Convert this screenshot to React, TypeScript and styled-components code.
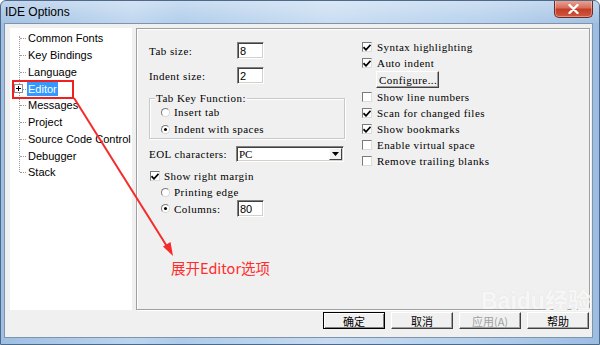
import styled, { createGlobalStyle } from 'styled-components';

const GlobalStyle = createGlobalStyle`
	html, body {
		margin: 0;
		padding: 0;
	}
	body {
		width: 600px;
		height: 345px;
		overflow: hidden;
		background: #ffffff;
	}
	* {
		box-sizing: border-box;
	}
`;

const Window = styled.div`
	position: relative;
	width: 600px;
	height: 345px;
	display: flex;
	flex-direction: column;
	border: 1px solid #4f6a89;
	border-radius: 6px 6px 0 0;
	overflow: hidden;
	background: linear-gradient(
		to right,
		#9ebfe3 0%,
		#bcd4ee 22%,
		#aecbea 30%,
		#c6dbf1 55%,
		#b4cfec 80%,
		#9cbde2 100%
	);
`;

const TitleBar = styled.div`
	height: 22px;
	display: flex;
	align-items: flex-start;
	justify-content: space-between;
	padding-left: 4px;
	background: linear-gradient(
		to bottom,
		rgba(255, 255, 255, 0.35),
		rgba(255, 255, 255, 0.05)
	);
`;

const Title = styled.span`
	font: 12px 'Liberation Sans', Arial, sans-serif;
	line-height: 22px;
	color: #000;
`;

const CloseButton = styled.div`
	width: 39px;
	height: 18px;
	margin-right: 6px;
	margin-top: -1px;
	border: 1px solid #6b2a22;
	border-top: none;
	border-radius: 0 0 5px 5px;
	background: linear-gradient(
		to bottom,
		#e9a99b 0%,
		#d7705c 45%,
		#c23d27 55%,
		#d0583f 100%
	);
	box-shadow: inset 0 0 0 1px rgba(255, 255, 255, 0.35);
	display: flex;
	align-items: center;
	justify-content: center;
`;

const Client = styled.div`
	flex: 1;
	margin: 0 6px 6px 3px;
	border: 1px solid #7f93aa;
	background: #f0f0f0;
	display: flex;
	flex-direction: column;
	padding-top: 4px;
`;

const MainRow = styled.div`
	display: flex;
	gap: 4px;
	padding: 0 2px 0 5px;
	height: 282px;
`;

const TreeBox = styled.div`
	position: relative;
	width: 122px;
	height: 282px;
	background: #ffffff;
	padding-top: 2px;
	font: 11px 'Liberation Sans', Arial, sans-serif;
	color: #000;

	&::before {
		content: '';
		position: absolute;
		left: 9px;
		top: 8px;
		height: 136px;
		border-left: 1px dotted #9a9a9a;
	}
`;

const TreeItem = styled.div`
	position: relative;
	height: 16.75px;
	display: flex;
	align-items: center;
	padding-left: 17px;

	&::before {
		content: '';
		position: absolute;
		left: 10px;
		top: 50%;
		width: 6px;
		border-top: 1px dotted #9a9a9a;
	}
`;

const TreeLabel = styled.span<{ $selected?: boolean }>`
	padding: 0 1px;
	line-height: 14px;
	white-space: nowrap;
	background: ${(p) => (p.$selected ? '#3399ff' : 'transparent')};
	color: ${(p) => (p.$selected ? '#ffffff' : '#000000')};
`;

const Expander = styled.span`
	position: absolute;
	left: 4px;
	top: 4px;
	width: 9px;
	height: 9px;
	z-index: 1;
	border: 1px solid #8e8e8e;
	background: #ffffff;
	display: flex;
`;

const OptionsPanel = styled.div`
	flex: 1;
	height: 282px;
	border: 1px solid #a0a0a0;
	box-shadow: inset 1px 1px 0 #ffffff, 1px 1px 0 #ffffff;
	display: flex;
	gap: 17px;
	padding: 10px 0 0 12px;
	font: 11px 'Liberation Serif', 'Times New Roman', serif;
	letter-spacing: 0.45px;
	color: #000;
`;

const LeftColumn = styled.div`
	width: 196px;
	margin-top: 3px;
	display: flex;
	flex-direction: column;
`;

const RightColumn = styled.div`
	display: flex;
	flex-direction: column;
`;

const FieldRow = styled.div<{ $top?: number; $indent?: number }>`
	display: flex;
	align-items: center;
	height: 17px;
	margin-top: ${(p) => p.$top ?? 0}px;
	padding-left: ${(p) => p.$indent ?? 0}px;
`;

const FieldLabel = styled.span<{ $width: number }>`
	width: ${(p) => p.$width}px;
	white-space: nowrap;
`;

const TextInput = styled.input`
	width: 27px;
	height: 17px;
	padding: 0 0 0 2px;
	margin: 0;
	border: 1px solid;
	border-color: #808080 #ffffff #ffffff #808080;
	box-shadow: inset 1px 1px 0 #404040, inset -1px -1px 0 #d4d0c8;
	background: #ffffff;
	font: 11px 'Liberation Sans', Arial, sans-serif;
	color: #000;
	outline: none;
`;

const Group = styled.div`
	position: relative;
	margin-top: 14px;
	border: 1px solid #c8c8c8;
	box-shadow: inset 1px 1px 0 #ffffff, 1px 1px 0 #ffffff;
	padding: 5px 0 1px 11px;
	display: flex;
	flex-direction: column;
	gap: 1px;
`;

const GroupTitle = styled.span`
	position: absolute;
	top: -7px;
	left: 5px;
	padding: 0 1px;
	line-height: 13px;
	background: #f0f0f0;
`;

const OptionRow = styled.div<{ $top?: number; $indent?: number; $gap?: number }>`
	display: flex;
	align-items: center;
	height: 16px;
	gap: ${(p) => p.$gap ?? 4}px;
	margin-top: ${(p) => p.$top ?? 0}px;
	padding-left: ${(p) => p.$indent ?? 0}px;
	white-space: nowrap;
`;

const RadioCircle = styled.span<{ $checked?: boolean }>`
	position: relative;
	width: 9px;
	height: 9px;
	border-radius: 50%;
	border: 1px solid #7a7a7a;
	border-right-color: #d8d8d8;
	border-bottom-color: #d8d8d8;
	background: #ffffff;
	flex: none;

	&::after {
		content: '';
		display: ${(p) => (p.$checked ? 'block' : 'none')};
		position: absolute;
		left: 2px;
		top: 2px;
		width: 3px;
		height: 3px;
		border-radius: 50%;
		background: #000;
	}
`;

const CheckBox = styled.span`
	width: 10px;
	height: 10px;
	border: 1px solid #7a7a7a;
	border-right-color: #dcdcdc;
	border-bottom-color: #dcdcdc;
	background: #ffffff;
	display: flex;
	align-items: center;
	justify-content: center;
	flex: none;
`;

const SelectBox = styled.div`
	width: 108px;
	height: 16px;
	border: 1px solid;
	border-color: #808080 #ffffff #ffffff #808080;
	box-shadow: inset 1px 1px 0 #404040, inset -1px -1px 0 #d4d0c8;
	background: #ffffff;
	display: flex;
	align-items: center;
	justify-content: space-between;
	padding: 0 1px 0 2px;
	letter-spacing: 0;
`;

const DropButton = styled.span`
	width: 13px;
	height: 12px;
	background: #f0f0f0;
	border: 1px solid;
	border-color: #ffffff #404040 #404040 #ffffff;
	display: flex;
	align-items: center;
	justify-content: center;
`;

const RaisedButton = styled.div`
	width: 63px;
	height: 17px;
	margin: 0 0 1px 14px;
	border: 1px solid;
	border-color: #ffffff #404040 #404040 #ffffff;
	box-shadow: inset -1px -1px 0 #a0a0a0;
	background: #f0f0f0;
	display: flex;
	align-items: center;
	padding-left: 2px;
	overflow: hidden;
`;

const ButtonRow = styled.div`
	display: flex;
	justify-content: flex-end;
	gap: 6px;
	margin-top: 2px;
	padding-right: 3px;
`;

const DialogButton = styled.div<{ $primary?: boolean; $disabled?: boolean }>`
	width: 62px;
	height: 17px;
	display: flex;
	align-items: center;
	justify-content: center;
	background: #f0f0f0;
	border: 1px solid;
	border-color: ${(p) =>
		p.$primary ? '#000000' : '#ffffff #404040 #404040 #ffffff'};
	box-shadow: ${(p) =>
		p.$primary
			? 'inset 1px 1px 0 #ffffff, inset -1px -1px 0 #808080'
			: 'inset -1px -1px 0 #a0a0a0'};
	font: 11px 'Noto Sans CJK SC', sans-serif;
	color: ${(p) => (p.$disabled ? '#a0a0a0' : '#000000')};
`;

const Annotation = styled.svg`
	position: absolute;
	left: 0;
	top: 0;
	pointer-events: none;
`;

const HighlightFrame = styled.div`
	position: absolute;
	left: 11px;
	top: 79px;
	width: 62px;
	height: 19px;
	border: 2px solid #f02020;
	pointer-events: none;
`;

const AnnotationText = styled.span`
	position: absolute;
	left: 170px;
	top: 256px;
	font: 14.5px 'Noto Sans CJK SC', 'Liberation Sans', sans-serif;
	color: #ff2d2d;
	white-space: nowrap;
`;

const Watermark = styled.div`
	position: absolute;
	left: 480px;
	top: 281px;
	color: rgba(255, 255, 255, 0.8);
	font: bold 23px 'Liberation Sans', 'Noto Sans CJK SC', sans-serif;
	white-space: nowrap;
	pointer-events: none;
	text-shadow: 0 0 1px rgba(200, 200, 200, 0.6);
`;

const Check = () => (
	<svg width="8" height="7" viewBox="0 0 8 7">
		<path d="M0.5 3.2 L3 5.8 L7.5 0.8" stroke="#000" strokeWidth="1.7" fill="none" />
	</svg>
);

const treeItems = [
	'Common Fonts',
	'Key Bindings',
	'Language',
	'Editor',
	'Messages',
	'Project',
	'Source Code Control',
	'Debugger',
	'Stack'
];

const rightOptions = [
	{ label: 'Show line numbers', checked: false },
	{ label: 'Scan for changed files', checked: true },
	{ label: 'Show bookmarks', checked: true },
	{ label: 'Enable virtual space', checked: false },
	{ label: 'Remove trailing blanks', checked: false }
];

const App = () => {
	return (
		<>
			<GlobalStyle />
			<Window>
				<TitleBar>
					<Title>IDE Options</Title>
					<CloseButton>
						<svg width="11" height="10" viewBox="0 0 11 10">
							<path
								d="M1.5 1 L9.5 9 M9.5 1 L1.5 9"
								stroke="#ffffff"
								strokeWidth="2.4"
								strokeLinecap="round"
							/>
						</svg>
					</CloseButton>
				</TitleBar>
				<Client>
					<MainRow>
						<TreeBox>
							{treeItems.map((item) => (
								<TreeItem key={item}>
									{item === 'Editor' && (
										<Expander>
											<svg width="7" height="7" viewBox="0 0 7 7">
												<path d="M1 3.5 H6 M3.5 1 V6" stroke="#000" strokeWidth="1" />
											</svg>
										</Expander>
									)}
									<TreeLabel $selected={item === 'Editor'}>{item}</TreeLabel>
								</TreeItem>
							))}
						</TreeBox>
						<OptionsPanel>
							<LeftColumn>
								<FieldRow>
									<FieldLabel $width={88}>Tab size:</FieldLabel>
									<TextInput readOnly defaultValue="8" />
								</FieldRow>
								<FieldRow $top={8}>
									<FieldLabel $width={88}>Indent size:</FieldLabel>
									<TextInput readOnly defaultValue="2" />
								</FieldRow>
								<Group>
									<GroupTitle>Tab Key Function:</GroupTitle>
									<OptionRow>
										<RadioCircle />
										Insert tab
									</OptionRow>
									<OptionRow>
										<RadioCircle $checked />
										Indent with spaces
									</OptionRow>
								</Group>
								<FieldRow $top={6}>
									<FieldLabel $width={87}>EOL characters:</FieldLabel>
									<SelectBox>
										PC
										<DropButton>
											<svg width="7" height="4" viewBox="0 0 7 4">
												<path d="M0 0 H7 L3.5 4 Z" fill="#000" />
											</svg>
										</DropButton>
									</SelectBox>
								</FieldRow>
								<OptionRow $top={6} $indent={1}>
									<CheckBox>
										<Check />
									</CheckBox>
									Show right margin
								</OptionRow>
								<OptionRow $indent={12}>
									<RadioCircle />
									Printing edge
								</OptionRow>
								<FieldRow $indent={12}>
									<FieldLabel $width={76}>
										<OptionRow>
											<RadioCircle $checked />
											Columns:
										</OptionRow>
									</FieldLabel>
									<TextInput readOnly defaultValue="80" />
								</FieldRow>
							</LeftColumn>
							<RightColumn>
								<OptionRow $gap={5}>
									<CheckBox>
										<Check />
									</CheckBox>
									Syntax highlighting
								</OptionRow>
								<OptionRow $gap={5}>
									<CheckBox>
										<Check />
									</CheckBox>
									Auto indent
								</OptionRow>
								<RaisedButton>Configure...</RaisedButton>
								{rightOptions.map((opt) => (
									<OptionRow key={opt.label} $gap={5}>
										<CheckBox>{opt.checked && <Check />}</CheckBox>
										{opt.label}
									</OptionRow>
								))}
							</RightColumn>
						</OptionsPanel>
					</MainRow>
					<ButtonRow>
						<DialogButton $primary>确定</DialogButton>
						<DialogButton>取消</DialogButton>
						<DialogButton $disabled>应用(A)</DialogButton>
						<DialogButton>帮助</DialogButton>
					</ButtonRow>
				</Client>
				<Watermark>Baidu经验</Watermark>
				<HighlightFrame />
				<Annotation width="600" height="345" viewBox="0 0 600 345">
					<path d="M73 97 L167 247" stroke="#f52a2a" strokeWidth="2" />
					<path d="M172 255 L162 245.5 L169.5 241 Z" fill="#f52a2a" />
				</Annotation>
				<AnnotationText>展开Editor选项</AnnotationText>
			</Window>
		</>
	);
};

export default App;
